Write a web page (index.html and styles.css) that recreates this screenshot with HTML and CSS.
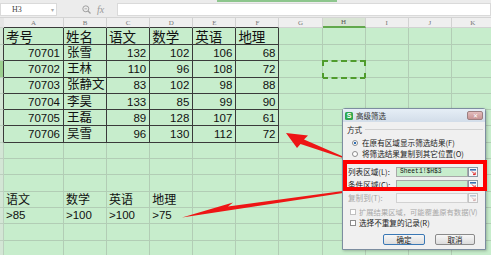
FILE: index.html
```html
<!DOCTYPE html>
<html lang="zh-CN">
<head>
    <meta charset="UTF-8">
    <meta name="viewport" content="width=device-width, initial-scale=1.0">
    <title>高级筛选</title>
    <link rel="stylesheet" href="styles.css">
</head>
<body>
    <!-- 编辑栏 -->
    <div class="topbar">
        <div class="tab-line"></div>
        <div class="bar-row">
            <div class="namebox"><span>H3</span><span class="caret">▾</span></div>
            <div class="fx-tools">
                <svg width="9" height="9" viewBox="0 0 9 9"><circle cx="3.8" cy="3.8" r="3" fill="none" stroke="#a0a0a0" stroke-width="1"/><path d="M6 6 L8.5 8.5" stroke="#a0a0a0" stroke-width="1.3"/><path d="M2.5 3.8 H5.1" stroke="#a0a0a0" stroke-width="0.8"/></svg>
                <span class="fx">fx</span>
            </div>
            <div class="formula"></div>
        </div>
    </div>

    <!-- 表格 -->
    <div class="sheet" id="sheet"></div>

    <!-- 箭头 -->
    <svg class="arrows" width="491" height="255" viewBox="0 0 491 255">
        <polygon points="286,133 308,135.5 304,139.5 343,156.5 343,158 300.5,144 297,148" fill="#ee1515"/>
        <polygon points="182,217.5 233,202.5 228,206.5 343,191 343,193 " fill="#ee1515"/>
    </svg>

    <!-- 高级筛选对话框 -->
    <div class="dialog">
        <div class="dlg-title">
            <span class="app-icon">S</span>
            <span class="dlg-name">高级筛选</span>
            <span class="dlg-close">✕</span>
        </div>
        <div class="group"><span>方式</span><i class="rule"></i></div>
        <div class="opt"><span class="radio on"></span>在原有区域显示筛选结果(F)</div>
        <div class="opt"><span class="radio"></span>将筛选结果复制到其它位置(O)</div>
        <div class="fields">
            <div class="field">
                <span class="lbl">列表区域(L):</span>
                <span class="input">Sheet1!$H$3</span>
                <span class="pick"><svg width="10" height="10" viewBox="0 0 10 10"><rect x="0.5" y="0.5" width="9" height="9" fill="#f5f7f9" stroke="#8a96a3"/><rect x="2" y="2" width="6" height="1.6" fill="#3b6fb0"/><path d="M4 4.5 L7 7.5 M7.2 5.3 V7.6 H5" stroke="#d22" stroke-width="1" fill="none"/></svg></span>
            </div>
            <div class="field">
                <span class="lbl">条件区域(C):</span>
                <span class="input"></span>
                <span class="pick"><svg width="10" height="10" viewBox="0 0 10 10"><rect x="0.5" y="0.5" width="9" height="9" fill="#f5f7f9" stroke="#8a96a3"/><rect x="2" y="2" width="6" height="1.6" fill="#3b6fb0"/><path d="M4 4.5 L7 7.5 M7.2 5.3 V7.6 H5" stroke="#d22" stroke-width="1" fill="none"/></svg></span>
            </div>
            <div class="field off">
                <span class="lbl">复制到(T):</span>
                <span class="input"></span>
                <span class="pick"><svg width="10" height="10" viewBox="0 0 10 10"><rect x="0.5" y="0.5" width="9" height="9" fill="#f7f7f7" stroke="#c4c4c4"/><rect x="2" y="2" width="6" height="1.6" fill="#b8c4d4"/><path d="M4 4.5 L7 7.5 M7.2 5.3 V7.6 H5" stroke="#d8b0b0" stroke-width="1" fill="none"/></svg></span>
            </div>
        </div>
        <div class="chk off"><span class="box"></span>扩展结果区域，可能覆盖原有数据(V)</div>
        <div class="chk"><span class="box"></span>选择不重复的记录(R)</div>
        <div class="buttons">
            <button class="btn primary">确定</button>
            <button class="btn">取消</button>
        </div>
        <div class="mark"></div>
    </div>

    <script>
        const cols = ["A", "B", "C", "D", "E", "F", "G", "H", "I", "J", "K"];
        const data = [
            ["考号", "姓名", "语文", "数学", "英语", "地理"],
            ["70701", "张雪", 132, 102, 106, 68],
            ["70702", "王林", 110, 96, 108, 72],
            ["70703", "张静文", 83, 102, 98, 88],
            ["70704", "李昊", 133, 85, 99, 90],
            ["70705", "王磊", 89, 128, 107, 61],
            ["70706", "吴雪", 96, 130, 112, 72]
        ];
        const criteria = [
            ["语文", "数学", "英语", "地理"],
            [">85", ">100", ">100", ">75"]
        ];

        const sheet = document.getElementById("sheet");

        const addCell = (cls, text) => {
            const cell = document.createElement("div");
            cell.className = "cell " + cls;
            if (text !== undefined) cell.textContent = text;
            sheet.appendChild(cell);
        };

        // 列标题
        addCell("corner");
        cols.forEach((c, i) => {
            let cls = "col-head";
            if (i < 6) cls += " top-edge";
            if (c === "H") cls += " active";
            addCell(cls, c);
        });

        // 行
        for (let r = 0; r < 14; r++) {
            const inTable = r < data.length;
            addCell("row-head" + (inTable ? " edge" : "") + (r === 2 ? " active" : ""));
            cols.forEach((c, i) => {
                let cls = "";
                let text;
                if (inTable && i < 6) {
                    cls = "t";
                    text = data[r][i];
                    if (r === 0) cls += " hd";
                    else if (i === 1) cls += " txt";
                    else cls += " num";
                } else if ((r === 10 || r === 11) && i < 4) {
                    text = criteria[r - 10][i];
                    cls = r === 10 ? "crit-hd" : "crit";
                }
                if (r === 2 && c === "H") cls += " sel";
                addCell(cls, text);
            });
        }
    </script>
</body>
</html>
```

FILE: styles.css
```css
/* Estilo general */
body {
    margin: 0;
    width: 491px;
    height: 255px;
    overflow: hidden;
    position: relative;
    background-color: #c7edcc;
    font-family: "Liberation Sans", "Noto Sans CJK SC", sans-serif;
    color: #111;
}

/* Barra de fórmulas */
.topbar {
    height: 18px;
    background-color: #ececec;
    border-bottom: 1px solid #d4d4d4;
    box-sizing: border-box;
}

.tab-line {
    height: 2px;
    width: 120px;
    margin-left: 217px;
    background-color: #8dc68d;
}

.bar-row {
    display: flex;
    height: 13px;
    margin-top: 1px;
}

.namebox {
    width: 57px;
    box-sizing: border-box;
    background: #fff;
    border: 1px solid #dadada;
    display: flex;
    align-items: center;
    padding-left: 11px;
    font: 8px "Liberation Serif", serif;
    color: #444;
}

.caret {
    margin-left: auto;
    margin-right: 2px;
    font-size: 6px;
    color: #aaa;
}

.fx-tools {
    width: 60px;
    box-sizing: border-box;
    display: flex;
    align-items: center;
    gap: 6px;
    padding-left: 25px;
}

.fx {
    font: italic 10px "Liberation Serif", serif;
    color: #9a9a9a;
}

.formula {
    flex: 1;
    background: #fff;
    border: 1px solid #dadada;
}

/* Hoja */
.sheet {
    display: grid;
    grid-template-columns: 4px 60px repeat(10, 43.1px);
    grid-template-rows: 10px 17px repeat(13, 16.3px);
}

.cell {
    position: relative;
    box-sizing: border-box;
    border-right: 1px solid #b2cdb5;
    border-bottom: 1px solid #b2cdb5;
    display: flex;
    align-items: flex-end;
    padding: 0 2px 1px;
    white-space: nowrap;
    overflow: visible;
    line-height: 1;
    font-size: 11.5px;
}

.corner {
    background-color: #e6e6e6;
    border-color: #cfcfcf;
}

.col-head {
    background-color: #efefef;
    border-color: #d2d2d2;
    justify-content: center;
    align-items: center;
    padding: 0;
    font: 7px "Liberation Serif", serif;
    color: #777;
}

.col-head.top-edge { border-bottom-color: #3a3a3a; }

.col-head.active {
    background-color: #d9e5d5;
    border-bottom: 2px solid #62a84c;
    color: #555;
}

.row-head {
    background-color: #d3e6d5;
    border-color: #bccfbe;
    padding: 0;
}

.row-head.edge { border-right-color: #3a3a3a; }
.row-head.active { background-color: #9ccf8f; }

.t { border-color: #3a3a3a; }

.hd {
    font-size: 13.5px;
    padding-left: 2px;
    padding-bottom: 0;
}

.txt {
    font-size: 12.5px;
    padding-left: 3px;
}

.num {
    justify-content: flex-end;
    padding-right: 3px;
}

.crit-hd {
    font-size: 12px;
    padding-left: 2px;
}

.crit {
    padding-left: 2px;
    padding-bottom: 2px;
}

.sel::after {
    content: "";
    position: absolute;
    left: -1px;
    top: -1px;
    right: -1px;
    bottom: -2px;
    border: 2px dashed #4f9c2c;
}

/* Flechas */
.arrows {
    position: absolute;
    left: 0;
    top: 0;
    pointer-events: none;
}

/* Diálogo */
.dialog {
    position: absolute;
    left: 342px;
    top: 108px;
    width: 144px;
    height: 142px;
    box-sizing: border-box;
    border: 1px solid #7c8da0;
    border-radius: 3px 3px 0 0;
    background-color: #f0f0f0;
    box-shadow: 1px 1px 3px rgba(0, 0, 0, 0.25);
    font-family: "Noto Sans CJK SC", sans-serif;
    font-size: 7.6px;
    line-height: 1;
    white-space: nowrap;
    color: #222;
}

.dlg-title {
    height: 13px;
    display: flex;
    align-items: center;
    padding-left: 2px;
    background: linear-gradient(#e6eef6, #d2dde9);
}

.app-icon {
    width: 8px;
    height: 8px;
    border-radius: 1.5px;
    background-color: #2fa84f;
    color: #fff;
    font: bold 7px "Liberation Sans", sans-serif;
    display: flex;
    align-items: center;
    justify-content: center;
}

.dlg-name {
    margin-left: 3px;
    font-size: 7.5px;
    color: #333;
}

.dlg-close {
    margin-left: auto;
    margin-right: 2px;
    width: 16px;
    height: 9px;
    box-sizing: border-box;
    border: 1px solid #9c7f80;
    border-radius: 2px;
    background: linear-gradient(#e3bcbc, #c89494);
    color: #fff;
    font-size: 6px;
    display: flex;
    align-items: center;
    justify-content: center;
}

.group {
    height: 15px;
    display: flex;
    align-items: center;
    gap: 3px;
    padding-left: 4px;
}

.rule {
    flex: 1;
    height: 1px;
    margin-right: 2px;
    background-color: #d2d2d2;
}

.opt {
    height: 11px;
    display: flex;
    align-items: center;
    gap: 4px;
    padding-left: 9px;
}

.opt:last-of-type { color: #444; }

.radio {
    width: 6px;
    height: 6px;
    box-sizing: border-box;
    border: 1px solid #8c8c8c;
    border-radius: 50%;
    background: #fff;
}

.radio.on { background: radial-gradient(circle, #2e6fb6 45%, #fff 55%); }

.fields { margin-top: 6px; }

.field {
    height: 13px;
    display: flex;
    align-items: center;
    padding-left: 5px;
}

.lbl { width: 48px; }

.input {
    width: 72px;
    height: 10px;
    box-sizing: border-box;
    border: 1px solid #a8a8a8;
    background-color: #c7edcc;
    display: flex;
    align-items: center;
    padding-left: 3px;
    font: 6.3px "Liberation Mono", monospace;
    color: #111;
}

.pick { display: flex; }

.field.off .lbl { color: #a6a6a6; }
.field.off .input {
    background-color: #f5f5f5;
    border-color: #d2d2d2;
}

.chk {
    height: 10.5px;
    display: flex;
    align-items: center;
    gap: 3px;
    padding-left: 7px;
}

.fields + .chk { margin-top: 3px; }
.chk.off { color: #a8a8a8; font-size: 7.3px; }

.box {
    width: 6px;
    height: 6px;
    flex-shrink: 0;
    box-sizing: border-box;
    border: 1px solid #8c8c8c;
    background: #fff;
}

.chk.off .box { border-color: #c0c0c0; }

.buttons {
    display: flex;
    justify-content: flex-end;
    gap: 10px;
    margin-top: 6px;
    padding-right: 10px;
}

.btn {
    width: 40px;
    height: 11px;
    padding: 0;
    box-sizing: border-box;
    border: 1px solid #8a8a8a;
    border-radius: 2px;
    background: linear-gradient(#f7f7f7, #dcdcdc);
    font-family: "Noto Sans CJK SC", sans-serif;
    font-size: 7.5px;
    line-height: 1;
    color: #222;
}

.btn.primary {
    width: 42px;
    border-color: #3a78b5;
}

/* Marca roja */
.mark {
    position: absolute;
    left: 0;
    top: 51px;
    width: 144px;
    height: 31px;
    box-sizing: border-box;
    border: 4px solid #ff0000;
}
```
